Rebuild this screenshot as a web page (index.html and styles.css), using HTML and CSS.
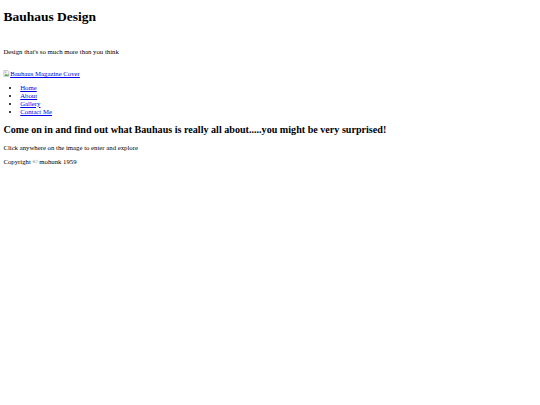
FILE: index.html
```html
<!DOCTYPE html>
<html lang="en">
<head>
<meta charset="utf-8">
<title>Bauhaus Design</title>
<link rel="stylesheet" href="styles.css">
</head>
<body>
<header class="site-header">
  <h1 class="title">Bauhaus Design</h1>
  <p class="tagline">Design that's so much more than you think</p>
</header>
<p class="cover"><a href="#" class="cover-link"><svg class="broken" viewBox="0 0 16 16" aria-hidden="true"><path d="M2 1h9l3 3v11H2z" fill="#f4f4f4" stroke="#9a9a9a" stroke-width="1.2"/><path d="M3 14l4-5 3 3 3-3v5z" fill="#4caf50"/><circle cx="6" cy="5" r="1.6" fill="#6fa8dc"/></svg>Bauhaus Magazine Cover</a></p>
<nav>
  <ul class="menu">
    <li><a href="#">Home</a></li>
    <li><a href="#">About</a></li>
    <li><a href="#">Gallery</a></li>
    <li><a href="#">Contact Me</a></li>
  </ul>
</nav>
<main>
  <h2 class="intro">Come on in and find out what Bauhaus is really all about.....you might be very surprised!</h2>
  <p>Click anywhere on the image to enter and explore</p>
</main>
<footer>
  <p>Copyright &copy; mohunk 1959</p>
</footer>
</body>
</html>
```
FILE: styles.css
```css
html {
  background: #ffffff;
}
body {
  margin: 0 3.375px 3.375px;
  padding-top: 0.1px;
  font-family: "Liberation Serif", "Times New Roman", serif;
  font-size: 6.75px;
  line-height: 7.68px;
  color: #000000;
}
p {
  margin: 6.75px 0;
}
a {
  color: #0000ee;
  text-decoration: underline;
}
.title {
  font-size: 13.5px;
  line-height: 15.5px;
  font-weight: bold;
  margin: 9px 0 9.05px;
}
.tagline {
  padding-top: 14.35px;
}
.cover {
  padding-top: 7.6px;
}
.broken {
  width: 6.75px;
  height: 6.75px;
  vertical-align: -1px;
}
.menu {
  margin: 6.75px 0;
  padding-left: 16.875px;
  list-style: disc;
}
.intro {
  font-size: 10.125px;
  line-height: 11.64px;
  font-weight: bold;
  margin: 8.4px 0;
}
```
